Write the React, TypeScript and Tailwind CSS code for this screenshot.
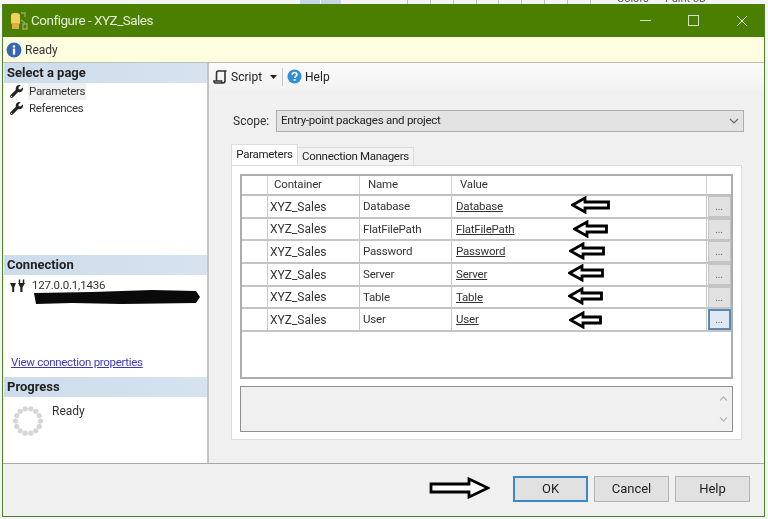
import React from "react";
import { FaWrench } from "react-icons/fa";

const rows = [
  ["Database", "Database"],
  ["FlatFilePath", "FlatFilePath"],
  ["Password", "Password"],
  ["Server", "Server"],
  ["Table", "Table"],
  ["User", "User"],
];

const ticks = [407, 430, 453, 476, 498, 521, 544, 567, 590];

function LeftArrow({ x, y, w }: { x: number; y: number; w: number }) {
  return (
    <svg className="absolute" style={{ left: x, top: y - 9 }} width={w} height={18} viewBox={`0 0 ${w} 18`}>
      <path d={`M1.5 9 L14 2 V6 H${w - 1.5} V12 H14 V16 Z`} fill="#fff" stroke="#000" strokeWidth="2.8" />
    </svg>
  );
}

function SectionHead({ children }: { children: React.ReactNode }) {
  return (
    <div className="h-[20px] pl-[3px] flex items-center text-[13px] font-bold text-[#222] bg-gradient-to-r from-[#cddceb] to-[#d6e3ef]">
      {children}
    </div>
  );
}

function Spinner() {
  const dots = Array.from({ length: 14 }, (_, i) => (i / 14) * Math.PI * 2);
  return (
    <svg width="34" height="34" viewBox="0 0 34 34">
      {dots.map((a, i) => (
        <circle key={i} cx={17 + 12.5 * Math.cos(a)} cy={17 + 12.5 * Math.sin(a)} r="2.6" fill="#d6d6d6" />
      ))}
    </svg>
  );
}

function Btn({ label, primary }: { label: string; primary?: boolean }) {
  return (
    <div
      className={`w-[75px] h-[26px] flex items-center justify-center text-[13px] text-[#222] bg-[#e1e1e1] ${
        primary ? "border-2 border-[#3a88c8]" : "border border-[#b4b4b4]"
      }`}
    >
      {label}
    </div>
  );
}

export default function App() {
  return (
    <div
      className="relative w-[768px] h-[519px] overflow-hidden bg-[#f2f5f1] text-[#333] blur-[0.4px]"
      style={{ fontFamily: 'Roboto, "Noto Sans", sans-serif' }}
    >
      {/* Strip of the window behind the dialog */}
      <div className="relative h-[4px] overflow-hidden bg-[#f4f4f4]">
        <div className="absolute left-[300px] top-0 w-[20px] h-[4px] bg-[#c5d6e8]" />
        <div className="absolute left-[321px] top-0 w-[20px] h-[4px] bg-[#c5d6e8]" />
        {ticks.map((t) => (
          <div key={t} className="absolute top-0 w-px h-[4px] bg-[#bdbdbd]" style={{ left: t }} />
        ))}
        <span className="absolute left-[617px] top-[-8px] text-[11px] leading-[13px] text-[#555]">Colors</span>
        <span className="absolute left-[665px] top-[-8px] text-[11px] leading-[13px] text-[#555]">Paint 3D</span>
      </div>
      <div className="ml-[2px] mr-[3px] h-[513px] flex flex-col border-x border-b border-[#4f7f2a] bg-[#f0f0f0]">
        {/* Title bar */}
        <div className="h-[33px] shrink-0 flex items-center bg-[#4a7f02] text-[#e4efd8]">
          <svg className="ml-[7px]" width="19" height="20" viewBox="0 0 19 20">
            <rect x="1" y="2" width="9" height="12" rx="3" fill="#f6cf5a" />
            <rect x="2" y="12" width="7" height="6" fill="#dcae3e" />
            <path d="M11 2h4v4M11 9l4 3M13 13h4v5h-4z" fill="none" stroke="#8fae72" strokeWidth="1.3" />
          </svg>
          <span className="ml-[2px] text-[13.5px] tracking-[-0.5px]">Configure - XYZ_Sales</span>
          <div className="ml-auto mr-[16px] flex items-center gap-[37px]">
            <div className="w-[11px] h-px bg-[#d5e3c4]" />
            <div className="w-[11px] h-[11px] border border-[#d5e3c4]" />
            <svg width="12" height="12" viewBox="0 0 12 12">
              <path d="M1 1 L11 11 M11 1 L1 11" stroke="#e4efd8" strokeWidth="1" />
            </svg>
          </div>
        </div>
        {/* Info bar */}
        <div className="h-[26px] shrink-0 flex items-center bg-[#fdfde0] border-b border-[#bdbdb0] text-[12px]">
          <svg className="ml-[3px]" width="16" height="16" viewBox="0 0 15 15">
            <circle cx="7.5" cy="7.5" r="7" fill="#3566b5" />
            <rect x="6.4" y="6.2" width="2.2" height="5.6" fill="#fff" />
            <rect x="6.4" y="3.2" width="2.2" height="2" fill="#fff" />
          </svg>
          <span className="ml-[3px]">Ready</span>
        </div>
        {/* Body */}
        <div className="flex-1 flex min-h-0">
          {/* Left pane */}
          <div className="w-[205px] shrink-0 ml-px bg-white border-r-2 border-[#c4c4c4] flex flex-col">
            <SectionHead>Select a page</SectionHead>
            <div className="pt-[0px] pb-[1px] text-[11.5px] tracking-[-0.3px] leading-[17px]">
              <div className="flex items-center h-[17px]">
                <FaWrench className="ml-[6px] text-[#222] text-[13px]" />
                <span className="ml-[5px] px-px bg-[#f0f0f0]">Parameters</span>
              </div>
              <div className="flex items-center h-[17px]">
                <FaWrench className="ml-[6px] text-[#222] text-[13px]" />
                <span className="ml-[5px] px-px">References</span>
              </div>
            </div>
            <div className="h-[137px]" />
            <SectionHead>Connection</SectionHead>
            <div className="h-[77px] relative">
              <div className="flex items-start pt-[2px] text-[11.5px] tracking-[-0.2px] leading-[16px]">
                <svg className="ml-[5px] mt-[2px]" width="18" height="14" viewBox="0 0 18 14">
                  <path d="M1 4h6L5.200 8.500V13H3.200V8.500z" fill="#222" />
                  <path d="M9 4h7l-2.500 4.500V13h-2.200V8.500z" fill="#222" />
                  <path d="M10.500 .5v3.500M14.500 .5v3.500" stroke="#222" strokeWidth="1.500" />
                </svg>
                <span className="ml-[5px]">127.0.0.1,1436</span>
              </div>
              <svg className="absolute left-[28px] top-[14px]" width="170" height="18" viewBox="0 0 170 18">
                <path d="M2 4 L60 3 L120 1 L164 2 L168 8 L164 14 L90 15 L40 14 L4 15 Z" fill="#0a0a0a" />
              </svg>
            </div>
            <div className="pl-[7px] h-[25px] leading-[20px] text-[11.5px] tracking-[-0.3px] text-[#3b3bb8] underline">View connection properties</div>
            <SectionHead>Progress</SectionHead>
            <div className="flex items-start">
              <div className="ml-[7px] mt-[7px]">
                <Spinner />
              </div>
              <span className="ml-[7px] mt-[6px] text-[12px] leading-[16px]">Ready</span>
            </div>
          </div>
          {/* Right pane */}
          <div className="flex-1 min-w-0 bg-[#f0f0f0]">
            {/* Toolbar */}
            <div className="h-[27px] flex items-center text-[12px] text-[#222] bg-gradient-to-b from-[#fafafa] to-[#f2f2f2]">
              <svg className="ml-[4px]" width="15" height="16" viewBox="0 0 15 15">
                <path d="M5 1.500h8.500M5 1.500C3.500 1.500 3.500 3 3.500 4v7.500M12 1.500V11c0 1.500-1 2.500-2 2.500H2.500C1.500 13.500 1 12.500 1 11.500h7.500c0 1 .5 2 1.500 2" fill="none" stroke="#333" strokeWidth="1.600" />
              </svg>
              <span className="ml-[3px]">Script</span>
              <svg className="ml-[8px]" width="7" height="4" viewBox="0 0 7 4">
                <path d="M0 0h7L3.500 4z" fill="#222" />
              </svg>
              <div className="ml-[5px] w-px h-[18px] bg-[#c8c8c8]" />
              <svg className="ml-[4px]" width="15" height="15" viewBox="0 0 15 15">
                <circle cx="7.500" cy="7.500" r="7" fill="#2f8fd0" />
                <path d="M5.200 5.800c0-3 4.800-3 4.800-.2 0 1.700-2.400 1.800-2.400 3.400" fill="none" stroke="#fff" strokeWidth="1.600" />
                <rect x="6.700" y="10" width="1.800" height="1.800" fill="#fff" />
              </svg>
              <span className="ml-[3px]">Help</span>
            </div>
            {/* Scope */}
            <div className="mt-[20px] ml-[24px] flex items-center h-[22px]">
              <span className="w-[44px] text-[12px]">Scope:</span>
              <div className="ml-[-1px] w-[468px] h-[22px] flex items-center justify-between bg-[#e3e3e3] border border-[#adadad] pl-[4px] pr-[4px] text-[11.5px] tracking-[-0.25px] text-[#222]">
                <span>Entry-point packages and project</span>
                <svg width="10" height="6" viewBox="0 0 10 6">
                  <path d="M1 1l4 4 4-4" fill="none" stroke="#666" strokeWidth="1.200" />
                </svg>
              </div>
            </div>
            {/* Tabs */}
            <div className="mt-[13px] ml-[22px] w-[511px]">
              <div className="flex items-end h-[20px] text-[11.5px] tracking-[-0.3px] text-[#222]">
                <div className="w-[67px] h-[21px] flex items-center justify-center bg-white border-x border-t border-[#dcdcdc] relative z-10">Parameters</div>
                <div className="w-[116px] h-[18px] flex items-center justify-center bg-[#f2f2f2] border-r border-t border-[#dcdcdc]">Connection Managers</div>
              </div>
              <div className="h-[275px] bg-white border border-[#dcdcdc] px-[8px] pt-[8px]">
                {/* Grid */}
                <div className="w-[493px] h-[205px] bg-white border-2 border-[#adadad] text-[11.5px] tracking-[-0.2px] text-[#333]">
                  <div className="grid grid-cols-[26px_92px_92px_255px_1fr] h-[20px] border-b-2 border-[#c0c0c0]">
                    <div className="border-r border-[#d0d0d0]" />
                    <div className="border-r border-[#d0d0d0] pl-[6px] flex items-center">Container</div>
                    <div className="border-r border-[#d0d0d0] pl-[8px] flex items-center">Name</div>
                    <div className="border-r border-[#d0d0d0] pl-[8px] flex items-center">Value</div>
                    <div />
                  </div>
                  {rows.map((r, i) => (
                    <div key={r[0]} className="grid grid-cols-[26px_92px_92px_255px_1fr] h-[22.700px] border-b-2 border-[#c4c4c4]">
                      <div className="border-r border-[#c8c8c8]" />
                      <div className="border-r border-[#c8c8c8] pl-[2px] flex items-center text-[12px] tracking-normal">XYZ_Sales</div>
                      <div className="border-r border-[#c8c8c8] pl-[3px] flex items-center">{r[0]}</div>
                      <div className="border-r border-[#c8c8c8] pl-[4px] flex items-center underline">{r[1]}</div>
                      <div className="flex items-center justify-center">
                        <div
                          className={`w-[23px] h-[21px] flex items-center justify-center text-[10px] text-[#666] ${
                            i === 5 ? "bg-[#dfe8f2] border-2 border-[#5b8ab0]" : "bg-[#e1e1e1] border border-[#c4c4c4]"
                          }`}
                        >
                          ...
                        </div>
                      </div>
                    </div>
                  ))}
                </div>
                {/* Description */}
                <div className="mt-[7px] w-[493px] h-[46px] flex justify-end bg-[#f0f0f0] border border-[#8f8f8f]">
                  <div className="w-[18px] flex flex-col items-center justify-between py-[9px]">
                    <svg width="9" height="5" viewBox="0 0 9 5">
                      <path d="M1 4.500l3.500-3.500 3.500 3.500" fill="none" stroke="#b8b8b8" strokeWidth="1.300" />
                    </svg>
                    <svg width="9" height="5" viewBox="0 0 9 5">
                      <path d="M1 .5l3.500 3.500 3.500-3.500" fill="none" stroke="#b8b8b8" strokeWidth="1.300" />
                    </svg>
                  </div>
                </div>
              </div>
            </div>
          </div>
        </div>
        {/* Footer */}
        <div className="h-[53px] shrink-0 flex items-center justify-end gap-[6px] pr-[14px] pb-[2px] border-t border-[#a8a8a8] bg-[#f0f0f0]">
          <Btn label="OK" primary />
          <Btn label="Cancel" />
          <Btn label="Help" />
        </div>
      </div>
      {/* Hand-drawn annotation arrows over the dialog */}
      <LeftArrow x={571} y={205} w={39} />
      <LeftArrow x={573} y={229} w={35} />
      <LeftArrow x={569} y={251} w={36} />
      <LeftArrow x={568} y={273} w={36} />
      <LeftArrow x={568} y={296} w={35} />
      <LeftArrow x={569} y={320} w={33} />
      <svg className="absolute left-[429px] top-[477px]" width="61" height="22" viewBox="0 0 61 22">
        <path d="M2 7 H40 V2 L59 11 L40 20 V15 H2 Z" fill="#fff" stroke="#000" strokeWidth="2.800" />
      </svg>
    </div>
  );
}
